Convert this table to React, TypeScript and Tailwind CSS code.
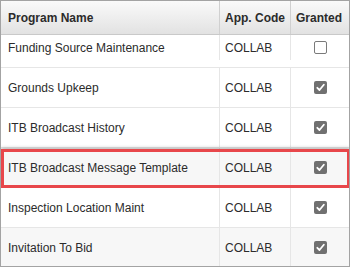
import React from "react";

type Row = { name: string; code: string; granted: boolean; shaded?: boolean };

const rows: Row[] = [
  { name: "Funding Source Maintenance", code: "COLLAB", granted: false },
  { name: "Grounds Upkeep", code: "COLLAB", granted: true },
  { name: "ITB Broadcast History", code: "COLLAB", granted: true },
  { name: "ITB Broadcast Message Template", code: "COLLAB", granted: true, shaded: true },
  { name: "Inspection Location Maint", code: "COLLAB", granted: true },
  { name: "Invitation To Bid", code: "COLLAB", granted: true, shaded: true },
];

function Check({ on }: { on: boolean }) {
  if (!on) {
    return <span className="block w-[13px] h-[13px] rounded-[2px] border border-[#7a7a7a] bg-white" />;
  }
  return (
    <span className="flex w-[13px] h-[13px] rounded-[2px] bg-[#707070] items-center justify-center">
      <svg width="9" height="9" viewBox="0 0 9 9">
        <path d="M1.3 4.8 L3.5 7 L7.8 1.8" fill="none" stroke="#fff" strokeWidth="1.8" strokeLinecap="round" strokeLinejoin="round" />
      </svg>
    </span>
  );
}

export default function App() {
  return (
    <div className="w-[352px] h-[268px] bg-white" style={{ fontFamily: '"Liberation Sans", Arial, sans-serif' }}>
      <div className="w-[350px] h-[267px] border border-[#a3a3a3] overflow-hidden text-[12px] text-[#2b2b2b]">
        <div className="grid grid-cols-[219px_71px_1fr] h-[34px] bg-gradient-to-b from-[#fafafa] to-[#e2e2e2] border-b border-[#c9c9c9] font-bold">
          <div className="flex items-center pl-[7px] border-r border-[#d0d0d0]">Program Name</div>
          <div className="flex items-center pl-[5px] border-r border-[#d0d0d0]">App. Code</div>
          <div className="flex items-center pl-[5px]">Granted</div>
        </div>
        {rows.map((r, i) => (
          <div
            key={r.name}
            className={`relative grid grid-cols-[219px_71px_1fr] border-b border-[#e6e6e6] ${i === 0 ? "h-[33px] pb-[7px]" : "h-[40px]"} ${r.shaded ? "bg-[#f7f7f7]" : "bg-white"}`}
          >
            <div className="flex items-center pl-[7px] border-r border-[#e6e6e6]">{r.name}</div>
            <div className="flex items-center pl-[5px] border-r border-[#e6e6e6]">{r.code}</div>
            <div className="flex items-center justify-center">
              <Check on={r.granted} />
            </div>
            {i === 3 && (
              <span className="pointer-events-none absolute left-0 right-[-1px] top-[1px] bottom-[-1px] border-[3px] border-[#e8474b] shadow-[0_0_4px_rgba(0,0,0,0.45)]" />
            )}
          </div>
        ))}
      </div>
    </div>
  );
}
